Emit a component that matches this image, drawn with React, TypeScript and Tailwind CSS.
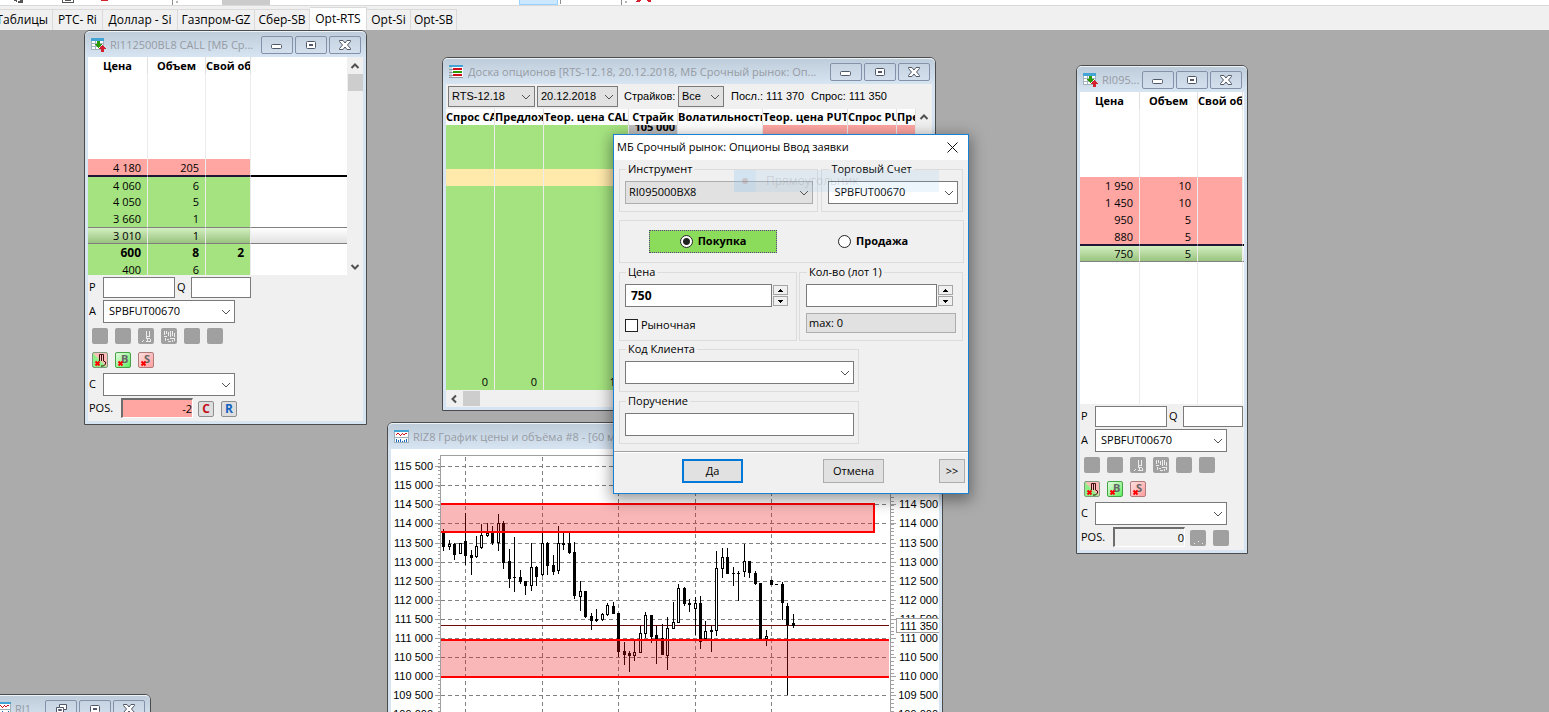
import React, { useState } from 'react';
import clsx from 'clsx';

type IconKind = 'book' | 'board' | 'chart';

interface MdiWindowProps {
  title: string;
  icon: IconKind;
  className: string;
  minimized?: boolean;
  children?: React.ReactNode;
}

interface LadderRow {
  price?: string;
  volume?: string;
  own?: string;
  kind: 'empty' | 'ask' | 'bid' | 'last';
  line?: 'top' | 'bottom';
  bold?: boolean;
}

const TABS = [
  { name: 'Таблицы', width: 'w-[53px] pr-1 justify-end' },
  { name: 'РТС- Ri', width: 'w-[50px] justify-center' },
  { name: 'Доллар - Si', width: 'w-[75px] justify-center' },
  { name: 'Газпром-GZ', width: 'w-[77px] justify-center' },
  { name: 'Сбер-SB', width: 'w-[55px] justify-center' },
  { name: 'Opt-RTS', width: 'w-[57px] justify-center' },
  { name: 'Opt-Si', width: 'w-[44px] justify-center' },
  { name: 'Opt-SB', width: 'w-[46px] justify-center' },
];

const emptyRows = (count: number): LadderRow[] => Array.from({ length: count }, () => ({ kind: 'empty' as const }));

const CALL_ROWS: LadderRow[] = [
  ...emptyRows(5),
  { price: '4 180', volume: '205', kind: 'ask', line: 'bottom' },
  { price: '4 060', volume: '6', kind: 'bid', line: 'top' },
  { price: '4 050', volume: '5', kind: 'bid' },
  { price: '3 660', volume: '1', kind: 'bid' },
  { price: '3 010', volume: '1', kind: 'last' },
  { price: '600', volume: '8', own: '2', kind: 'bid', bold: true },
  { price: '400', volume: '6', kind: 'bid' },
];

const PUT_ROWS: LadderRow[] = [
  ...emptyRows(4),
  { price: '1 950', volume: '10', kind: 'ask' },
  { price: '1 450', volume: '10', kind: 'ask' },
  { price: '950', volume: '5', kind: 'ask' },
  { price: '880', volume: '5', kind: 'ask', line: 'bottom' },
  { price: '750', volume: '5', kind: 'last', line: 'top' },
  ...emptyRows(9),
];

// x, high, low, body top, body bottom, filled - in thirds of a pixel
const CANDLES: [number, number, number, number, number, number][] = [
  [175, 478, 543, 484, 531, 1], [193, 511, 541, 523, 531, 0], [208, 520, 570, 521, 555, 1],
  [226, 518, 553, 520, 553, 0], [241, 430, 585, 512, 557, 1], [259, 540, 615, 554, 564, 1],
  [274, 498, 563, 529, 563, 0], [290, 462, 537, 494, 533, 0], [307, 458, 500, 488, 498, 0],
  [322, 468, 524, 483, 520, 1], [340, 432, 543, 459, 518, 0], [355, 453, 596, 458, 577, 1],
  [373, 537, 654, 572, 627, 1], [388, 500, 666, 621, 624, 1], [406, 600, 643, 621, 636, 1],
  [421, 633, 675, 633, 648, 1], [439, 518, 662, 591, 648, 0], [454, 588, 648, 590, 620, 1],
  [472, 482, 617, 520, 616, 0], [487, 516, 615, 520, 588, 1], [505, 556, 615, 585, 606, 1],
  [520, 468, 612, 519, 602, 0], [535, 490, 540, 520, 527, 1], [553, 490, 552, 520, 549, 1],
  [568, 515, 686, 546, 678, 1], [586, 633, 722, 663, 682, 0], [601, 662, 744, 663, 741, 1],
  [619, 728, 780, 737, 752, 1], [634, 718, 755, 746, 752, 1], [652, 729, 752, 732, 751, 0],
  [667, 698, 737, 705, 735, 0], [685, 696, 732, 708, 732, 1], [700, 729, 861, 730, 847, 1],
  [718, 816, 885, 842, 853, 1], [733, 843, 906, 848, 858, 1], [748, 810, 873, 846, 858, 0],
  [766, 768, 849, 789, 849, 0], [781, 726, 803, 735, 791, 0], [799, 735, 819, 735, 800, 1],
  [814, 768, 882, 794, 807, 1], [832, 762, 854, 804, 854, 1], [847, 740, 900, 774, 858, 0],
  [865, 695, 777, 756, 776, 0], [880, 642, 758, 654, 758, 0], [898, 650, 708, 654, 702, 1],
  [913, 686, 726, 699, 705, 1], [931, 680, 794, 699, 716, 0], [946, 678, 836, 699, 816, 1],
  [961, 753, 807, 783, 807, 0], [979, 768, 846, 780, 786, 1], [994, 542, 797, 594, 782, 0],
  [1012, 534, 624, 561, 596, 0], [1027, 534, 612, 560, 611, 1], [1045, 590, 648, 608, 611, 1],
  [1060, 603, 692, 608, 611, 1], [1078, 522, 621, 573, 605, 0], [1093, 573, 624, 573, 609, 1],
  [1111, 603, 645, 609, 642, 1], [1126, 639, 807, 640, 807, 1], [1144, 780, 828, 798, 807, 0],
  [1159, 629, 645, 630, 645, 1], [1174, 642, 645, 642, 645, 1], [1192, 636, 750, 642, 698, 1],
  [1207, 699, 975, 708, 766, 1], [1225, 732, 774, 759, 768, 1],
];

const PRICE_LEVELS = [
  { label: '115 500', y: 17 },
  { label: '115 000', y: 36 },
  { label: '114 500', y: 55 },
  { label: '114 000', y: 74 },
  { label: '113 500', y: 94 },
  { label: '113 000', y: 113 },
  { label: '112 500', y: 132 },
  { label: '112 000', y: 151 },
  { label: '111 500', y: 170 },
  { label: '111 000', y: 189 },
  { label: '110 500', y: 208 },
  { label: '110 000', y: 227 },
  { label: '109 500', y: 246 },
  { label: '109 000', y: 265 },
];

const WindowIcon: React.FC<{ kind: IconKind }> = ({ kind }) => (
  <svg width="15" height="15" viewBox="0 0 15 15" className="shrink-0" shapeRendering="crispEdges">
    {kind === 'book' && (
      <>
        <path d="M0 1h13v11H0z" fill="#fff" />
        <path d="M0 3h1v9H0zM12 3h1v9h-1zM0 11h13v1H0zM4 3h1v9H4zM1 5h12v1H1zM1 8h12v1H1z" fill="#a3b3bd" />
        <path d="M0 0h13v3H0z" fill="#42a5d6" />
        <path d="M6 3h3v3h2v1h-1v1H9v1H8v1H7V9H6V8H5V7H4V6h2z" fill="#2d9a08" />
        <path d="M11 7h1v1h1v1h1v1h1v1h-2v3h-3v-3H8v-1h1V9h1V8h1z" fill="#d3222e" />
      </>
    )}
    {kind === 'board' && (
      <>
        <path d="M0 0h14v13H0z" fill="#fff" />
        <path d="M0 0h14v2H0z" fill="#42a5d6" />
        <path d="M0 2h3v11H0z" fill="#c7d0d6" />
        <path d="M0 4h4v1H0zM0 7h4v1H0zM0 10h4v1H0zM0 12h14v1H0z" fill="#8f9ba3" />
        <path d="M4 3h9v2H4zM4 9h9v2H4z" fill="#cf1020" />
        <path d="M4 6h9v2H4z" fill="#2d9a08" />
      </>
    )}
    {kind === 'chart' && (
      <>
        <path d="M0 0h15v13H0z" fill="#fff" />
        <path d="M0 0h15v2H0z" fill="#42a5d6" />
        <path d="M0 2h1v11H0zM14 2h1v11h-1zM0 12h15v1H0zM1 7h13v1H1z" fill="#9fb0bb" />
        <path d="M2 4h1v1H2zM3 3h2v1H3zM5 4h1v1H5zM6 5h1v1H6zM7 4h1v1H7zM8 3h1v1H8zM9 4h2v1H9zM11 3h2v1h-2z" fill="#cf1020" />
        <path d="M2 9h1v3H2zM4 10h1v2H4zM6 9h1v3H6zM8 11h1v1H8zM10 10h1v2h-1zM12 9h1v3h-1z" fill="#1565c0" />
      </>
    )}
  </svg>
);

const CaptionButton: React.FC<{ label: string; children: React.ReactNode }> = ({ label, children }) => (
  <button
    aria-label={label}
    className="flex h-[18px] w-8 shrink-0 items-center justify-center rounded-[2px] border border-[#8391ab] bg-linear-to-b from-[#c6d3e1] to-[#d3dfed]"
  >
    <svg width="14" height="12" viewBox="0 0 14 12" fill="#fff" stroke="#50576a">
      {children}
    </svg>
  </button>
);

const MdiWindow: React.FC<MdiWindowProps> = ({ title, icon, className, minimized, children }) => (
  <section className={clsx('absolute flex flex-col rounded-t-[6px] border border-[#4b4b4b] bg-[#d7e4f2]', className)}>
    <header className="flex h-[26px] shrink-0 items-start gap-[2px] rounded-t-[5px] border-t border-[#eef3f8] bg-linear-to-b from-[#bfcddb] to-[#d7e4f2] pt-1 pr-[5px] pl-[6px]">
      <div className="flex h-[18px] min-w-0 flex-1 items-center gap-1">
        <WindowIcon kind={icon} />
        <span className="overflow-hidden text-[11px] leading-[18px] whitespace-nowrap text-[#969ba3]">{title}</span>
      </div>
      <CaptionButton label="Свернуть">
        {minimized ? (
          <path d="M5.5 1.5h7v5h-3v3h-7v-5h3zM5.5 4.5h4v2M4.5 6.5h3v1h-3z" />
        ) : (
          <rect x="1.5" y="5.5" width="10" height="4" rx="1" />
        )}
      </CaptionButton>
      <CaptionButton label="Развернуть">
        <rect x="2.5" y="2.5" width="9" height="7" rx="1" />
        <rect x="5.5" y="5.5" width="3" height="1" />
      </CaptionButton>
      <CaptionButton label="Закрыть">
        <path d="M1.5 1.5h3.500L7 4l2-2.500h3.500v1L9.500 6l3 3.500v1H9L7 8l-2 2.500H1.500v-1L4.500 6l-3-3.500z" />
      </CaptionButton>
    </header>
    <div className="mx-[3px] mb-[3px] flex min-h-0 flex-1 flex-col bg-[#f0f0f0]">{children}</div>
  </section>
);

const Chevron: React.FC<{ dir: 'down' | 'up' | 'left'; className?: string }> = ({ dir, className }) => (
  <svg width="10" height="10" viewBox="0 0 10 10" fill="none" stroke="#505050" className={clsx('pointer-events-none shrink-0', className)}>
    {dir === 'down' && <path d="M1 3l4 4 4-4" />}
    {dir === 'up' && <path d="M1.500 7L5 3.500 8.500 7" strokeWidth="2" />}
    {dir === 'left' && <path d="M7 1.500L3.500 5 7 8.500" strokeWidth="2" />}
  </svg>
);

interface PickerProps {
  id: string;
  value: string;
  className: string;
  selectClass: string;
  label?: string;
}

const Picker: React.FC<PickerProps> = ({ id, value, className, selectClass, label }) => (
  <div className={clsx('relative flex', className)}>
    <select
      id={id}
      aria-label={label}
      defaultValue={value}
      className={clsx('h-full w-full appearance-none rounded-none border border-[#7a7a7a] outline-none', selectClass)}
    >
      <option value={value}>{value}</option>
    </select>
    <Chevron dir="down" className="absolute top-1/2 right-1 -translate-y-1/2" />
  </div>
);

const Ladder: React.FC<{ rows: LadderRow[]; className: string; scroll?: boolean }> = ({ rows, className, scroll }) => {
  const cellColor = (row: LadderRow) => {
    switch (row.kind) {
      case 'ask':
        return 'bg-[#ffa6a3]';
      case 'bid':
        return 'bg-[#a5e380]';
      case 'last':
        return 'bg-linear-to-b from-[#d3efc0] to-[#99c37e]';
      default:
        return 'bg-white';
    }
  };

  const rowLine = (row: LadderRow) =>
    clsx(
      row.line === 'bottom' && 'border-b border-b-[#201535]',
      row.line === 'top' && 'border-t border-t-[#201535]',
      row.kind === 'last' && 'border-b border-b-[#808080]',
      row.kind === 'last' && !row.line && 'border-t border-t-[#808080]',
    );

  const tailLine = (row: LadderRow) =>
    clsx(
      row.line === 'bottom' && 'border-b border-b-black',
      row.line === 'top' && 'border-t border-t-black',
      row.kind === 'last' && 'border-b border-b-[#808080] bg-linear-to-b from-white to-[#e2e2e2]',
      row.kind === 'last' && !row.line && 'border-t border-t-[#808080]',
    );

  return (
    <div className={clsx('flex overflow-hidden bg-white', className)}>
      <div className="min-w-0 flex-1">
        <table className="w-full table-fixed border-separate border-spacing-0">
          <colgroup>
            <col className="w-[60px]" />
            <col className="w-[58px]" />
            <col className="w-[45px]" />
            <col />
          </colgroup>
          <thead>
            <tr className="h-[17px] text-[11px] leading-4">
              {['Цена', 'Объем', 'Свой об'].map((name) => (
                <th key={name} className="overflow-hidden border-r border-[#e0e0e0] p-0 text-center font-bold whitespace-nowrap">
                  {name}
                </th>
              ))}
              <td className="p-0" />
            </tr>
          </thead>
          <tbody>
            {rows.map((row, i) => (
              <tr key={i} className={clsx('h-[17px] text-right leading-[15px]', row.bold ? 'text-[12px] font-bold' : 'text-[11px]')}>
                {[row.price, row.volume, row.own].map((value, col) => (
                  <td key={col} className={clsx('border-r border-r-[#ececec] p-0 pr-[6px]', cellColor(row), rowLine(row))}>
                    {value}
                  </td>
                ))}
                <td className={clsx('p-0', tailLine(row))} />
              </tr>
            ))}
          </tbody>
        </table>
      </div>
      {scroll && (
        <div className="flex w-4 flex-col items-center justify-between bg-[#f0f0f0] pb-[3px]">
          <div className="flex flex-col items-center">
            <Chevron dir="up" className="mt-1 mb-[3px]" />
            <div className="h-[17px] w-[15px] bg-[#cdcdcd]" />
          </div>
          <Chevron dir="up" className="rotate-180" />
        </div>
      )}
    </div>
  );
};

const GrayButton: React.FC<{ label: string; art?: string }> = ({ label, art }) => (
  <button disabled aria-label={label} className="size-4 rounded-[2px] bg-[#a0a0a0]">
    {art && (
      <svg width="16" height="16" viewBox="0 0 16 16" fill="#ececec" shapeRendering="crispEdges">
        <path d={art} />
      </svg>
    )}
  </button>
);

const CancelButton: React.FC<{ label: string; letter?: string; className: string }> = ({ label, letter, className }) => (
  <button aria-label={label} className={clsx('size-4 overflow-hidden rounded-[2px] border', className)}>
    <svg width="14" height="14" viewBox="0 0 14 14">
      {letter ? (
        <text x="5" y="10" fontSize="11" fontWeight="bold" fill="#666" fontFamily="Open Sans, sans-serif">{letter}</text>
      ) : (
        <path d="M6.500 8V1.500h2V8M8.500 7V1.500h2V8l2 1v2l-2 2H8" fill="none" stroke="#3a0d0d" />
      )}
      <path d="M2.500 8.500l4 4M6.500 8.500l-4 4" stroke="#f00" strokeWidth="2" />
    </svg>
  </button>
);

const QuickOrderForm: React.FC<{ id: string; position: string; open?: boolean }> = ({ id, position, open }) => (
  <form className="flex flex-col pt-[2px] pl-px text-[11px]">
    <div className="flex h-[21px] items-center">
      <label htmlFor={`${id}-p`} className="w-[14px]">P</label>
      <input id={`${id}-p`} className="h-full w-[72px] border border-[#7a7a7a] bg-white px-1 outline-none" />
      <label htmlFor={`${id}-q`} className="w-4 pl-[2px]">Q</label>
      <input id={`${id}-q`} className="h-full w-[60px] border border-[#7a7a7a] bg-white px-1 outline-none" />
    </div>
    <div className="mt-[2px] flex h-[23px] items-center">
      <label htmlFor={`${id}-a`} className="w-[14px]">A</label>
      <Picker id={`${id}-a`} value="SPBFUT00670" className="h-full w-[132px]" selectClass="bg-white pl-[5px]" />
    </div>
    <div className="mt-[5px] flex gap-[7px] pl-[3px]">
      <GrayButton label="Купить" />
      <GrayButton label="Продать" />
      <GrayButton label="Снять" art="M8 3h1v7H8zM11 3h1v6h-1zM9 8h2v1H9zM8 10h4v1H8zM8 13h5v1H8zM12 11h1v2h-1zM9 11h1v2H9zM5 12h1v1H5zM4 13h1v1H4z" />
      <GrayButton label="Снять все" art="M3 3h1v4H3zM5 3h1v3H5zM7 4h1v4H7zM9 3h1v6H9zM11 3h1v5h-1zM13 5h1v4h-1zM3 8h3v1H3zM4 10h1v3H4zM6 11h2v1H6zM7 13h3v1H7zM9 10h5v1H9zM13 11h1v2h-1zM11 12h1v2h-1z" />
      <GrayButton label="Стоп" />
      <GrayButton label="Тейк" />
    </div>
    <div className="mt-2 flex gap-[7px] pl-[3px]">
      <CancelButton label="Снять все заявки" className="border-[#7d9a7d] bg-linear-to-tr from-[#8ff08a] from-45% to-[#ffb9b9] to-55%" />
      <CancelButton label="Снять покупки" letter="B" className="border-[#45a345] bg-linear-to-br from-[#e2fbe0] to-[#56ee5c]" />
      <CancelButton label="Снять продажи" letter="S" className="border-[#b07b7b] bg-linear-to-br from-[#ffdede] to-[#ff9e9e]" />
    </div>
    <div className="mt-[5px] flex h-[23px] items-center">
      <label htmlFor={`${id}-c`} className="w-[14px]">C</label>
      <Picker id={`${id}-c`} value="" className="h-full w-[132px]" selectClass="bg-white pl-[5px]" />
    </div>
    <div className="mt-[2px] flex h-5 items-center">
      <label htmlFor={`${id}-pos`} className="w-8">POS.</label>
      <input
        id={`${id}-pos`}
        readOnly
        defaultValue={position}
        className={clsx(
          'h-full w-[72px] border-t-2 border-r border-b border-l-2 border-t-[#6d6d6d] border-r-white border-b-white border-l-[#6d6d6d] text-right outline-none',
          open ? 'bg-[#ffa6a3]' : 'bg-[#f0f0f0]',
        )}
      />
      <div className="ml-[5px] flex gap-[7px] pt-[2px]">
        {open ? (
          <>
            <button className="size-4 rounded-[2px] border border-[#8f8f8f] bg-[#dedede] text-[12px] leading-[14px] font-bold text-[#c4101c]">C</button>
            <button className="size-4 rounded-[2px] border border-[#8f8f8f] bg-[#dedede] text-[12px] leading-[14px] font-bold text-[#1162c0]">R</button>
          </>
        ) : (
          <>
            <GrayButton label="Закрыть позицию" art="M4 13h1v1H4zM8 11h1v1H8zM12 13h1v1h-1z" />
            <GrayButton label="Перевернуть позицию" />
          </>
        )}
      </div>
    </div>
  </form>
);

const BOARD_COLUMNS = [
  { name: 'Спрос CALL', width: 'w-[49px]', body: 'bg-[#a5e380]' },
  { name: 'Предложение CALL', width: 'w-[49px]', body: 'bg-[#a5e380]' },
  { name: 'Теор. цена CALL', width: 'w-[85px]', body: 'bg-[#a5e380]' },
  { name: 'Страйк', width: 'w-[49px]', body: 'bg-[#c0c0c0]' },
  { name: 'Волатильность', width: 'w-[85px]', body: 'bg-white' },
  { name: 'Теор. цена PUT', width: 'w-[85px]', body: 'bg-[#ffa6a3]' },
  { name: 'Спрос PUT', width: 'w-[49px]', body: 'bg-[#ffa6a3]' },
  { name: 'Предложение PUT', width: 'w-[19px]', body: 'bg-[#ffa6a3]' },
];

const BoardCols = () => (
  <colgroup>
    {BOARD_COLUMNS.map((col) => (
      <col key={col.name} className={col.width} />
    ))}
  </colgroup>
);

const OptionBoard = () => {
  const cellText = (row: number, col: number) => {
    if (row === 0 && col === 3) return '105 000';
    if (row === 15 && col < 2) return '0';
    if (row === 15 && col === 2) return '10';
    return '';
  };

  return (
    <>
      <div className="flex h-[25px] shrink-0 items-center gap-[2px] pl-[2px] font-['Liberation_Sans',Arial,sans-serif] text-[11px] whitespace-nowrap">
        <Picker id="board-base" label="Базовый актив" value="RTS-12.18" className="h-[21px] w-[87px]" selectClass="bg-[#e1e1e1] pl-[3px]" />
        <Picker id="board-date" label="Дата исполнения" value="20.12.2018" className="h-[21px] w-[81px]" selectClass="bg-[#e1e1e1] pl-[3px]" />
        <label htmlFor="board-strikes" className="w-[56px] pl-1">Страйков:</label>
        <Picker id="board-strikes" value="Все" className="h-[21px] w-[46px]" selectClass="bg-[#e1e1e1] pl-[3px]" />
        <span className="w-[78px] pl-[5px]">Посл.: 111 370</span>
        <span className="pl-[5px]">Спрос: 111 350</span>
      </div>
      <div className="flex min-h-0 flex-1">
        <div className="flex min-w-0 flex-1 flex-col">
          <table className="w-full shrink-0 table-fixed border-separate border-spacing-0 bg-white">
            <BoardCols />
            <thead>
              <tr className="h-4 text-[11px] leading-4">
                {BOARD_COLUMNS.map((col) => (
                  <th key={col.name} className="overflow-hidden border-r border-[#e0e0e0] p-0 text-center font-bold whitespace-nowrap">
                    {col.name}
                  </th>
                ))}
              </tr>
            </thead>
          </table>
          <div className="flex min-h-0 flex-1 flex-col justify-end overflow-hidden">
            <table className="w-full table-fixed border-separate border-spacing-0">
              <BoardCols />
              <tbody>
                {Array.from({ length: 16 }, (_, row) => (
                  <tr key={row} className="h-[17px] text-right text-[11px] leading-[17px] whitespace-nowrap">
                    {BOARD_COLUMNS.map((col, i) => (
                      <td
                        key={col.name}
                        className={clsx(
                          'border-r border-[#ececec] p-0',
                          i === 3 ? 'pr-[2px] font-bold' : 'pr-[6px]',
                          row === 3 && i < 3 ? 'bg-[#ffe9ab]' : col.body,
                        )}
                      >
                        {cellText(row, i)}
                      </td>
                    ))}
                  </tr>
                ))}
              </tbody>
            </table>
          </div>
        </div>
        <div className="flex w-4 flex-col items-center pt-[3px]">
          <Chevron dir="up" />
        </div>
      </div>
      <div className="flex h-[17px] shrink-0 items-center gap-1 pl-[3px]">
        <Chevron dir="left" />
        <div className="h-[15px] w-[17px] bg-[#cdcdcd]" />
      </div>
    </>
  );
};

const PriceChart = () => {
  const ticks = Array.from({ length: 68 }, (_, i) => Math.round(10 + i * 3.814));

  return (
    <svg width="548" height="290" className="bg-white" shapeRendering="crispEdges">
      {PRICE_LEVELS.map(({ label, y }) => (
        <g key={label}>
          <path d={`M50 ${y + 0.5}H498`} stroke="#808080" strokeDasharray="4 3" />
          <path d={`M44 ${y + 0.5}H49M500 ${y + 0.5}H505`} stroke="#a0a0a0" />
        </g>
      ))}
      {[74, 151, 227, 304, 380].map((x) => (
        <path key={x} d={`M${x + 0.5} 8V290`} stroke="#808080" strokeDasharray="4 3" />
      ))}
      <path d={ticks.map((y) => `M47 ${y + 0.5}H49M500 ${y + 0.5}H503`).join('')} stroke="#a0a0a0" />
      <path d="M49.500 290V6.500H499.500V290" fill="none" stroke="#a0a0a0" />
      <path d="M50 176.500H498" stroke="#6e0c0c" />
      {CANDLES.map(([x, high, low, top, bottom, filled]) => {
        const cx = Math.floor(x / 3) - 6;
        const y = Math.round(top / 3) - 79;
        const h = Math.max(1, Math.round((bottom - top) / 3));
        const yHigh = Math.round(high / 3) - 79;
        const yLow = Math.round(low / 3) - 79;
        return (
          <g key={x}>
            <rect x={cx} y={yHigh} width={1} height={Math.max(1, yLow - yHigh)} />
            <rect x={cx - 1} y={y} width={3} height={h} />
            {!filled && h > 2 && <rect x={cx} y={y + 1} width={1} height={h - 2} fill="#fff" />}
          </g>
        );
      })}
      <rect x="50" y="55" width="433" height="28" fill="#ea1212" fillOpacity="0.3" />
      <path d="M50 55H483V83H50" fill="none" stroke="#f00" strokeWidth="2" />
      <rect x="50" y="191" width="448" height="37" fill="#ea1212" fillOpacity="0.3" />
      <path d="M50 191H498M50 228H498" stroke="#f00" strokeWidth="2" />
      <g fontFamily="Liberation Sans, Arial, sans-serif" fontSize="11">
        {PRICE_LEVELS.map(({ label, y }, i) => (
          <React.Fragment key={label}>
            <text x="42" y={y + 4} textAnchor="end">{label}</text>
            {i > 1 && <text x="547" y={y + 4} textAnchor="end">{label}</text>}
          </React.Fragment>
        ))}
        <rect x="505.500" y="169.500" width="43" height="14" fill="#fff" stroke="#a0a0a0" />
        <text x="547" y="181" textAnchor="end">111 350</text>
      </g>
    </svg>
  );
};

const Group: React.FC<{ title: string; className: string; children: React.ReactNode }> = ({ title, className, children }) => (
  <fieldset className={clsx('border border-[#dcdcdc] pt-1 pr-1 pb-[7px]', className)}>
    <legend className="ml-px h-4 px-[2px] leading-4">{title}</legend>
    {children}
  </fieldset>
);

const Spinner = () => (
  <div className="flex flex-col gap-px pt-px">
    {['up', 'down'].map((dir) => (
      <button
        key={dir}
        type="button"
        aria-label={dir === 'up' ? 'Больше' : 'Меньше'}
        className="flex h-[10px] w-[15px] items-center justify-center border border-[#a5a5a5] bg-[#f0f0f0]"
      >
        <svg width="5" height="3" viewBox="0 0 5 3" shapeRendering="crispEdges">
          <path d={dir === 'up' ? 'M2 0h1v1h1v1h1v1H0V2h1V1h1z' : 'M0 0h5v1H4v1H3v1H2V2H1V1H0z'} />
        </svg>
      </button>
    ))}
  </div>
);

const OrderDialog = () => {
  const [side, setSide] = useState<'buy' | 'sell'>('buy');

  return (
    <form className="absolute top-[104px] left-[613px] w-[356px] border border-[#1a80d2] bg-[#f0f0f0] text-[11px] shadow-[0_4px_14px_2px_rgba(0,0,0,0.4)]">
      <header className="flex h-[25px] items-center justify-between bg-white pr-[10px] pl-[3px]">
        <h2 className="text-[11px]">МБ Срочный рынок: Опционы Ввод заявки</h2>
        <button type="button" aria-label="Закрыть">
          <svg width="11" height="11" viewBox="0 0 11 11" stroke="#111" fill="none">
            <path d="M.500 .500l10 10M10.500 .500l-10 10" />
          </svg>
        </button>
      </header>
      <div className="flex flex-col px-[5px] pt-px">
        <div className="flex gap-[3px]">
          <Group title="Инструмент" className="w-[200px] pl-[5px]">
            <Picker id="instrument" label="Инструмент" value="RI095000BX8" className="h-[23px]" selectClass="border-[#adadad] bg-[#e1e1e1] pl-[3px]" />
          </Group>
          <Group title="Торговый Счет" className="w-[142px] pl-[6px]">
            <Picker id="account" label="Торговый Счет" value="SPBFUT00670" className="h-[23px]" selectClass="bg-white pl-[5px]" />
          </Group>
        </div>
        <div className="mt-2 flex h-[43px] w-[345px] items-center border border-[#dcdcdc] pl-[29px] text-[11px] font-bold">
          <label className="flex h-[23px] w-32 items-center justify-center gap-[5px] border border-dotted border-[#5b3a86] bg-[#8bdc5a]">
            <input
              type="radio"
              name="side"
              checked={side === 'buy'}
              onChange={() => setSide('buy')}
              className="size-[13px] appearance-none rounded-full border border-[#222] bg-white checked:bg-[radial-gradient(circle,#222_0_3px,#fff_4px)]"
            />
            Покупка
          </label>
          <label className="ml-[61px] flex items-center gap-[5px]">
            <input
              type="radio"
              name="side"
              checked={side === 'sell'}
              onChange={() => setSide('sell')}
              className="size-[13px] appearance-none rounded-full border border-[#222] bg-white checked:bg-[radial-gradient(circle,#222_0_3px,#fff_4px)]"
            />
            Продажа
          </label>
        </div>
        <div className="mt-px flex gap-[2px]">
          <Group title="Цена" className="w-[179px] pl-[5px]">
            <div className="flex gap-px">
              <input aria-label="Цена" defaultValue="750" className="h-[23px] w-[147px] border border-[#7a7a7a] bg-white px-[5px] text-[12px] font-bold outline-none" />
              <Spinner />
            </div>
            <label className="mt-3 flex h-[13px] items-center gap-[3px]">
              <input type="checkbox" className="size-[13px] appearance-none border border-[#222] bg-white checked:bg-[#222]" />
              Рыночная
            </label>
          </Group>
          <Group title="Кол-во (лот 1)" className="w-[165px] pl-[6px]">
            <div className="flex gap-px">
              <input aria-label="Количество" className="h-[23px] w-[131px] border border-[#7a7a7a] bg-white px-[5px] outline-none" />
              <Spinner />
            </div>
            <button type="button" className="mt-[6px] block h-5 w-[150px] border border-[#adadad] bg-[#e1e1e1] pl-[2px] text-left">max: 0</button>
          </Group>
        </div>
        <Group title="Код Клиента" className="w-60 pl-[5px]">
          <Picker id="client" label="Код Клиента" value="" className="h-[23px]" selectClass="bg-white pl-[5px]" />
        </Group>
        <Group title="Поручение" className="mt-px w-60 pl-[5px]">
          <input aria-label="Поручение" className="block h-[23px] w-full border border-[#7a7a7a] bg-white px-[5px] outline-none" />
        </Group>
      </div>
      <footer className="mt-[7px] border-t border-[#a0a0a0]">
        <div className="flex border-t border-white pt-[6px] pr-[3px] pb-[10px] pl-[68px]">
          <button type="button" className="h-6 w-[61px] border-2 border-[#0078d7] bg-[#e1e1e1] leading-5">Да</button>
          <button type="button" className="ml-20 h-6 w-[61px] border border-[#adadad] bg-[#e1e1e1]">Отмена</button>
          <button type="button" className="ml-auto h-6 w-[26px] border border-[#adadad] bg-[#e1e1e1]">&gt;&gt;</button>
        </div>
      </footer>
      {/* fading remains of the drawing tool menu */}
      <div className="pointer-events-none absolute top-[35px] left-[120px] flex h-[22px] w-[205px] items-center bg-[#8cc4f4]/15 text-[12px] text-[#333]/15">
        <span className="flex h-full w-[22px] items-center justify-center bg-[#8cc4f4]/15">
          <span className="size-[6px] rounded-full bg-[#a05030]/20" />
        </span>
        <span className="pl-[10px]">Прямоугольник</span>
      </div>
    </form>
  );
};

const ToolbarStrip = () => (
  <div className="h-[6px] shrink-0 border-b border-[#d9d9d9] bg-white">
    <svg width="700" height="5" viewBox="0 0 700 5" shapeRendering="crispEdges">
      <path d="M14 0h2v1h-2zM16 0h1v2h-1zM18 1h2v1h-2zM20 0h2v2h-2zM22 0h1v3h-1zM18 2h4v1h-4zM62 0h1v2h-1zM73 0h1v2h-1zM62 2h12v1H62zM65 0h6v1h-6z" fill="#555" />
      <path d="M101 0h7v1h-7z" fill="#d3222e" />
      <path d="M172 0h1v5h-1zM621 0h1v5h-1zM560 0h1v4h-1z" fill="#8e8e8e" />
      <path d="M176 1h2v2h-2zM625 1h2v2h-2z" fill="#b5b5b5" />
      <path d="M222 0h48v5h-48z" fill="#cbcbcb" />
      <path d="M519 0h39v5h-39z" fill="#99d1ff" />
      <path d="M520 0h37v4h-37z" fill="#cce8ff" />
      <path d="M637 0h4v1h-1v1h-4V1h1zM647 0h4v2h-3V1h-1z" fill="#d3222e" />
    </svg>
  </div>
);

export default function App() {
  return (
    <div className="flex h-screen flex-col overflow-hidden bg-[#f0f0f0] font-['Open_Sans','Noto_Sans',sans-serif] text-[11px] text-black">
      <ToolbarStrip />
      <nav className="flex h-6 shrink-0 items-end text-[12px] whitespace-nowrap">
        {TABS.map((tab) => (
          <button
            key={tab.name}
            className={clsx(
              'flex items-center border-t border-r border-[#dadada]',
              tab.width,
              tab.name === 'Opt-RTS' ? 'h-[23px] bg-white pb-px' : 'h-[21px]',
            )}
          >
            {tab.name}
          </button>
        ))}
      </nav>
      <main className="relative flex-1 overflow-hidden bg-[#ababab]">
        <MdiWindow title="RI112500BL8 CALL [МБ Ср..." icon="book" className="top-0 left-[84px] w-[283px]">
          <Ladder rows={CALL_ROWS} className="h-[218px]" scroll />
          <div className="pb-[3px]">
            <QuickOrderForm id="call" position="-2" open />
          </div>
        </MdiWindow>
        <MdiWindow title="Доска опционов [RTS-12.18, 20.12.2018, МБ Срочный рынок: Оп..." icon="board" className="top-[27px] left-[442px] h-[354px] w-[494px]">
          <OptionBoard />
        </MdiWindow>
        <MdiWindow title="RI095..." icon="book" className="top-[35px] left-[1076px] w-[172px]">
          <Ladder rows={PUT_ROWS} className="h-[312px]" />
          <div className="pb-[3px]">
            <QuickOrderForm id="put" position="0" />
          </div>
        </MdiWindow>
        <MdiWindow title="RIZ8 График цены и объёма #8 - [60 минут]" icon="chart" className="top-[392px] left-[387px] w-[556px]">
          <PriceChart />
        </MdiWindow>
        <MdiWindow title="RI1" icon="chart" className="top-[664px] left-[-11px] w-[162px]" minimized />
        <OrderDialog />
      </main>
    </div>
  );
}
